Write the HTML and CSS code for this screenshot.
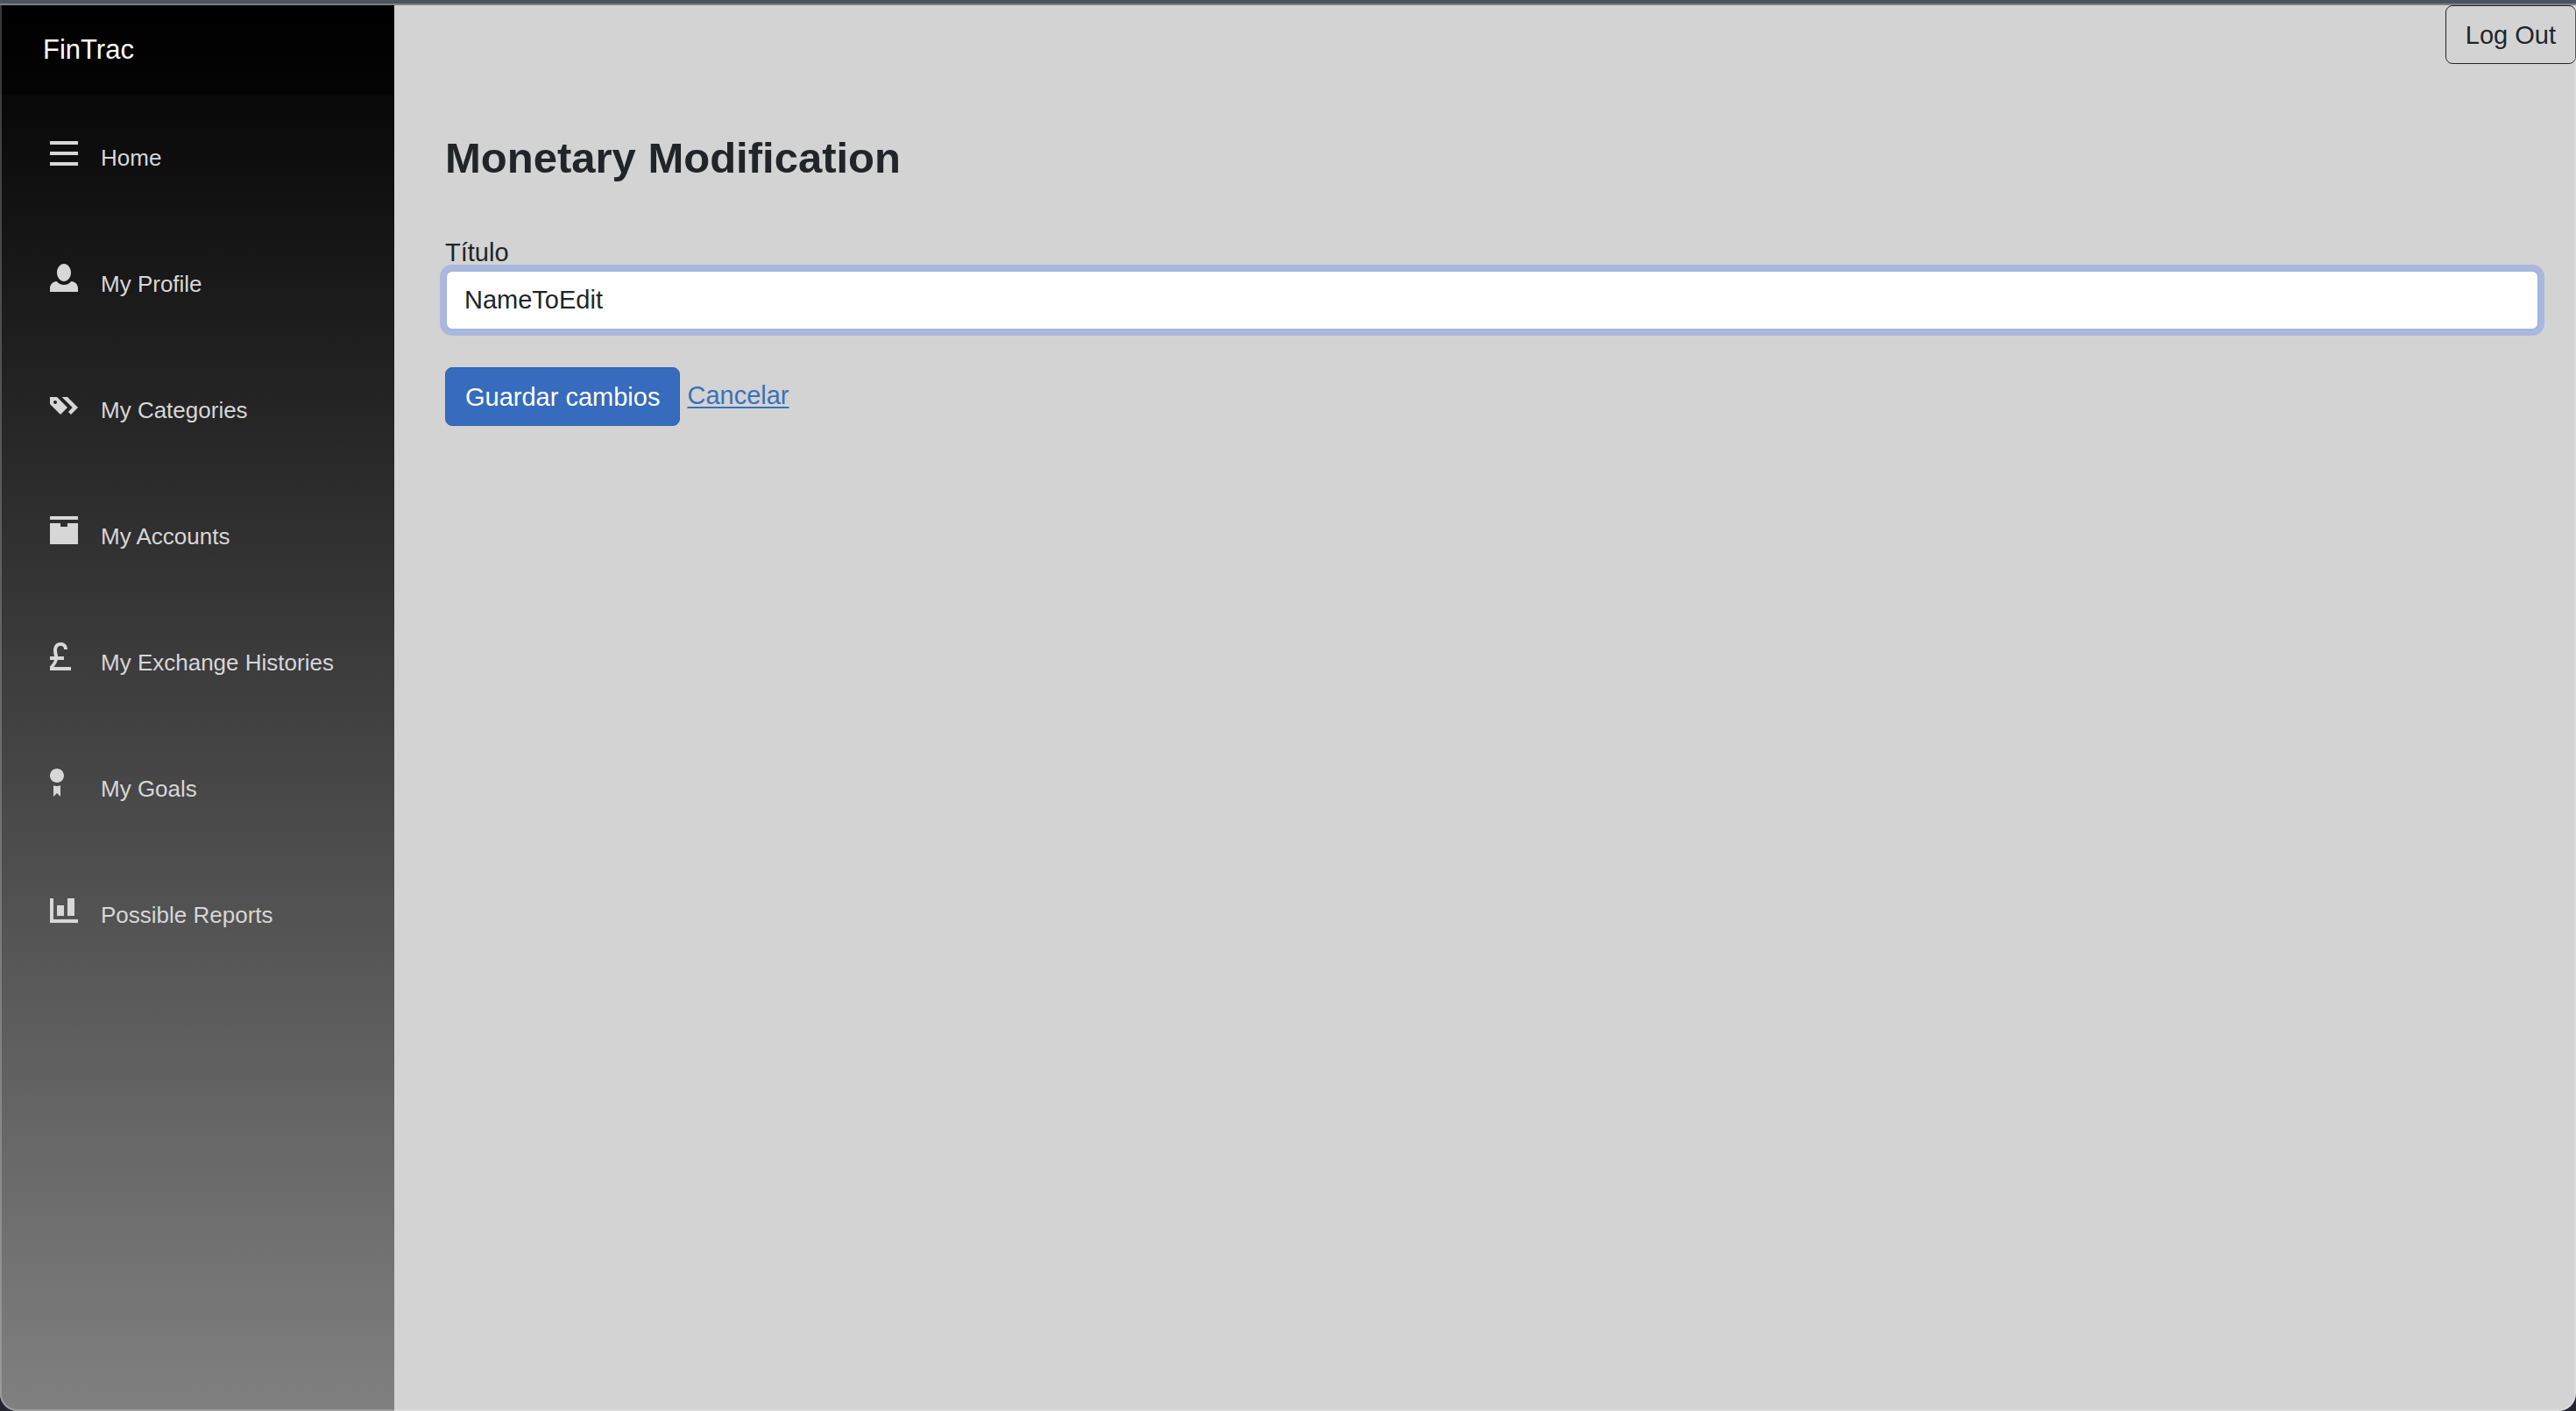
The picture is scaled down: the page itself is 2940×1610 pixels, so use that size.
FILE: index.html
```html
<!DOCTYPE html>
<html lang="es">
<head>
<meta charset="utf-8">
<meta name="viewport" content="width=device-width, initial-scale=1">
<title>FinTrac</title>
<link rel="stylesheet" href="styles.css">
</head>
<body>
<div class="page">
  <aside class="sidebar">
    <div class="brand-row"><a class="brand" href="#">FinTrac</a></div>
    <nav class="nav">
      <a class="nav-link" href="#">
        <svg class="icon" viewBox="0 0 8 8" aria-hidden="true"><path d="M0 1v1h8v-1h-8zm0 3v1h8v-1h-8zm0 3v1h8v-1h-8z"/></svg>
        <span>Home</span>
      </a>
      <a class="nav-link" href="#">
        <svg class="icon" viewBox="0 0 8 8" aria-hidden="true"><path d="M4 0c-1.1 0-2 1.12-2 2.5s.9 2.5 2 2.5 2-1.12 2-2.5-.9-2.5-2-2.5zm-2.09 5c-1.06.05-1.91.92-1.91 2v1h8v-1c0-1.08-.84-1.95-1.91-2-.54.61-1.28 1-2.09 1-.81 0-1.55-.39-2.09-1z"/></svg>
        <span>My Profile</span>
      </a>
      <a class="nav-link" href="#">
        <svg class="icon" viewBox="0 0 8 8" aria-hidden="true"><path d="M0 2v2l3 3 1.5-1.5.5-.5-2-2-1-1h-2zm3.41 0l3 3-1.19 1.22.78.78 2-2-3-3h-1.59zm-1.91 1c.28 0 .5.22.5.5s-.22.5-.5.5-.5-.22-.5-.5.22-.5.5-.5z"/></svg>
        <span>My Categories</span>
      </a>
      <a class="nav-link" href="#">
        <svg class="icon" viewBox="0 0 8 8" aria-hidden="true"><path d="M0 0v1h8v-1h-8zm0 2v6h8v-6h-3v1h-2v-1h-3z"/></svg>
        <span>My Accounts</span>
      </a>
      <a class="nav-link" href="#">
        <svg class="icon" viewBox="0 0 8 8" aria-hidden="true"><path d="M3 0c-.62 0-1.16.26-1.5.69-.34.43-.5.99-.5 1.56 0 .69.16 1.25.25 1.75h-1.25v1h1.22c-.11.45-.37.96-1.06 1.66l-.16.13v1.22h6v-1h-4.91c.64-.73.98-1.4 1.13-2h1.78v-1h-1.72c-.08-.68-.28-1.24-.28-1.75 0-.39.11-.73.28-.94.17-.21.37-.31.72-.31.39 0 .61.11.75.25s.25.36.25.75h1c0-.58-.17-1.1-.53-1.47-.36-.37-.88-.53-1.47-.53z"/></svg>
        <span>My Exchange Histories</span>
      </a>
      <a class="nav-link" href="#">
        <svg class="icon" viewBox="0 0 8 8" aria-hidden="true"><path d="M2 0c-1.1 0-2 .9-2 2s.9 2 2 2 2-.9 2-2-.9-2-2-2zm-1 4.81v3.19l1-1 1 1v-3.19c-.31.11-.65.19-1 .19s-.69-.08-1-.19z"/></svg>
        <span>My Goals</span>
      </a>
      <a class="nav-link" href="#">
        <svg class="icon" viewBox="0 0 8 8" aria-hidden="true"><path d="M0 1v7h8v-1h-7v-6h-1zm5 0v5h2v-5h-2zm-3 2v3h2v-3h-2z"/></svg>
        <span>Possible Reports</span>
      </a>
    </nav>
  </aside>
  <main class="main">
    <header class="toolbar"><button class="btn btn-outline" type="button">Log Out</button></header>
    <form class="content">
      <h1 class="title">Monetary Modification</h1>
      <label class="label" for="titulo">Título</label>
      <input class="field" id="titulo" type="text" value="NameToEdit">
      <div class="actions">
        <button class="btn btn-primary" type="button">Guardar cambios</button>
        <a class="cancel" href="#">Cancelar</a>
      </div>
    </form>
  </main>
</div>
</body>
</html>
```
FILE: styles.css
```css
* {
  box-sizing: border-box;
}

body {
  margin: 0;
  min-height: 100vh;
  display: flex;
  flex-direction: column;
  border-top: 4px solid #4b545e;
  background: #24252f;
  color: #212529;
  font-family: "Liberation Sans", Arial, sans-serif;
  font-size: 29px;
  line-height: 40px;
}

.page {
  position: relative;
  flex: 1;
  display: flex;
  overflow: hidden;
  border-top: 2px solid #7c8085;
  border-radius: 0 0 20px 20px;
  background: #d3d3d3;
}

/* thin light edge of the window, over the content */
.page::after {
  content: "";
  position: absolute;
  inset: 0;
  border: 2px solid rgba(255, 255, 255, 0.22);
  border-top: 0;
  border-radius: 0 0 20px 20px;
  pointer-events: none;
}

.sidebar {
  flex: none;
  width: 450px;
  background: linear-gradient(180deg, #000000, #808080);
}

.brand-row {
  display: flex;
  align-items: center;
  height: 102px;
  padding-left: 49px;
  background: rgba(0, 0, 0, 0.4);
}

.brand {
  color: #ffffff;
  font-size: 31px;
  text-decoration: none;
}

.nav {
  display: flex;
  flex-direction: column;
  gap: 56px;
  padding: 28px 24px;
}

.nav-link {
  display: flex;
  align-items: baseline;
  gap: 26px;
  height: 88px;
  padding-left: 33px;
  color: #d7d7d7;
  font-size: 26px;
  line-height: 88px;
  text-decoration: none;
  white-space: nowrap;
}

.icon {
  flex: none;
  width: 32px;
  height: 32px;
  fill: currentColor;
}

.main {
  flex: 1;
  min-width: 0;
}

.toolbar {
  display: flex;
  justify-content: flex-end;
}

.content {
  display: flex;
  flex-direction: column;
  padding: 78px 42px 42px 58px;
}

.title {
  margin: 0 0 59px;
  font-size: 49px;
  line-height: 58px;
  font-weight: 700;
}

.field {
  width: 100%;
  height: 69px;
  padding: 0 20px;
  border: 2px solid #a0b5e0;
  border-radius: 8px;
  outline: 0;
  background: #ffffff;
  box-shadow: 0 0 0 6px #a9b8db;
  color: inherit;
  font: inherit;
}

.actions {
  display: flex;
  align-items: center;
  gap: 8px;
  margin-top: 42px;
}

.btn {
  height: 67px;
  padding: 0 20px;
  border: 2px solid;
  border-radius: 8px;
  font: inherit;
}

.btn-outline {
  border: 1px solid #212529;
  padding: 0 22px;
  background: transparent;
  color: #212529;
}

.btn-primary {
  border: 1px solid #3563ae;
  padding: 0 22px;
  background: #366bbd;
  color: #ffffff;
}

.cancel {
  padding-bottom: 4px;
  color: #3a71b8;
  text-underline-offset: 3px;
  text-decoration-thickness: 2px;
}
```
